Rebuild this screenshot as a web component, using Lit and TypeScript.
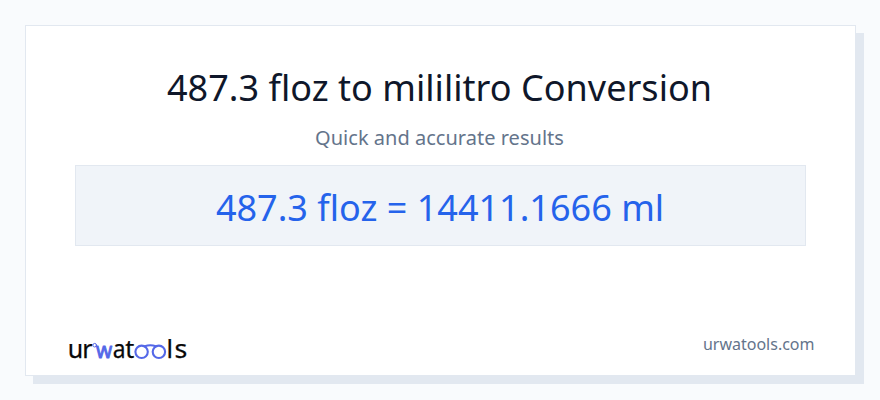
import { LitElement, html, css } from "lit";
import { customElement } from "lit/decorators.js";

@customElement("brand-logo")
class BrandLogo extends LitElement {
  static styles = css`
    :host { display: block; width: 124px; height: 38px; }
    svg { display: block; overflow: visible; }
    text { font-family: "Noto Sans", sans-serif; font-size: 25px; fill: #080808; stroke: #080808; stroke-width: 0.25; stroke-linejoin: round; }
    text.accent { font-size: 22px; fill: #5468e8; stroke: #5468e8; stroke-width: 0.9; }
    .line { fill: none; stroke: #5468e8; stroke-width: 2.1; stroke-linecap: round; }
    .thin { stroke-width: 1; }
  `;
  render() {
    return html`<svg width="124" height="38" viewBox="66 329 124 38">
      <text x="67.8" y="357.8">u</text>
      <text x="82.2" y="357.8">r</text>
      <text class="accent" x="96" y="357.6" textLength="16.2" lengthAdjust="spacingAndGlyphs">w</text>
      <text x="112.7" y="357.8" textLength="12.8" lengthAdjust="spacingAndGlyphs">a</text>
      <text x="125.2" y="357.8">t</text>
      <text x="166.4" y="357.8">l</text>
      <text x="174.4" y="357.8" textLength="12.8" lengthAdjust="spacingAndGlyphs">s</text>
      <circle class="line thin" cx="94.7" cy="345.2" r="1.8"/>
      <circle class="line" cx="141.6" cy="351.8" r="6.2"/>
      <circle class="line" cx="158.9" cy="351.8" r="6.2"/>
      <path class="line" d="M144.8 346.2Q150.3 344.4 155.8 346.2"/>
    </svg>`;
  }
}

@customElement("app-root")
class AppRoot extends LitElement {
  static styles = css`
    :host {
      display: block; box-sizing: border-box; width: 880px; height: 400px;
      padding: 25px 24px 24px 25px; background: #f9fbfd;
      font-family: "Noto Sans", sans-serif;
    }
    .card {
      box-sizing: border-box; display: flex; flex-direction: column;
      height: 351px; padding: 36px 49px 0; background: #fff;
      border: 1px solid #e2e8f0; box-shadow: 8px 8px 0 #e2e8f0; text-align: center;
    }
    h1 { margin: 0 2px 0 0; font-size: 36px; line-height: 52px; letter-spacing: 0.03px; font-weight: 400; color: #0f172a; }
    p { margin: 9px 2px 0 0; font-size: 20px; line-height: 30px; letter-spacing: 0.02px; color: #64748b; }
    .result {
      box-sizing: border-box; margin-top: 12px; height: 81px; line-height: 83px; padding-right: 1px;
      background: #f0f4f9; border: 1px solid #e2e8f0; color: #2563eb; font-size: 36px;
      letter-spacing: 0.01px;
    }
    footer {
      display: flex; justify-content: space-between; align-items: flex-start;
      margin: 83px -8.5px 0 -9px;
    }
    .site { margin-top: 7px; font-size: 16px; line-height: 16px; color: #64748b; }
  `;
  render() {
    return html`<main class="card">
      <h1>487.3 floz to mililitro Conversion</h1>
      <p>Quick and accurate results</p>
      <div class="result">487.3 floz = 14411.1666 ml</div>
      <footer><brand-logo></brand-logo><span class="site">urwatools.com</span></footer>
    </main>`;
  }
}
